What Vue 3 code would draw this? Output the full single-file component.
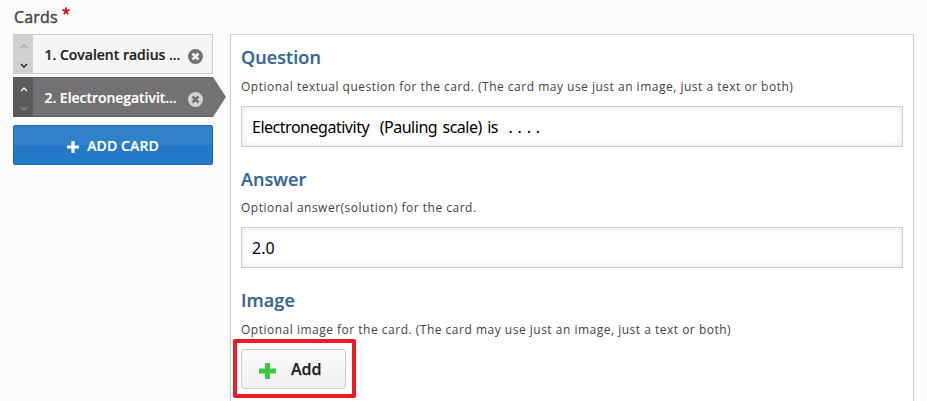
<script setup>
import { ref } from 'vue'

const cards = [
  { label: '1. Covalent radius ...', active: false },
  { label: '2. Electronegativit...', active: true },
]
const question = ref('Electronegativity\u00a0 (Pauling scale) is\u00a0 . . . .')
const answer = ref('2.0')
</script>

<template>
  <main class="editor">
    <div class="label">Cards<svg class="star" viewBox="0 0 8 8"><path d="M4 4V.2M4 4L.4 2.9M4 4l3.6-1.1M4 4L1.9 7.2M4 4l2.1 3.2" /></svg></div>
    <div class="columns">
      <aside class="side">
        <div v-for="card in cards" :key="card.label" class="tab" :class="{ active: card.active }">
          <div class="order">
            <svg class="up" viewBox="0 0 8 5"><path d="M1 4l3-3 3 3" /></svg>
            <svg class="down" viewBox="0 0 8 5"><path d="M1 1l3 3 3-3" /></svg>
          </div>
          <span class="name">{{ card.label }}</span>
          <svg class="remove" viewBox="0 0 14 14"><circle cx="7" cy="7" r="7" /><path d="M4.2 4.2l5.6 5.6M9.8 4.2l-5.6 5.6" /></svg>
        </div>
        <button class="add-card">
          <svg viewBox="0 0 12 12"><path d="M4.4 0h3.2v4.4H12v3.2H7.6V12H4.4V7.6H0V4.4h4.4z" /></svg>
          <span>ADD CARD</span>
        </button>
      </aside>
      <section class="panel">
        <div class="field">
          <h2>Question</h2>
          <p>Optional textual question for the card. (The card may use just an image, just a text or both)</p>
          <input v-model="question" class="long" type="text" />
        </div>
        <div class="field lower">
          <h2>Answer</h2>
          <p>Optional answer(solution) for the card.</p>
          <input v-model="answer" type="text" />
        </div>
        <div class="field lower media">
          <h2>Image</h2>
          <p>Optional image for the card. (The card may use just an image, just a text or both)</p>
          <div class="highlight">
            <button class="add">
              <svg viewBox="0 0 17 16"><path d="M6 0h5v5.5h6v5h-6V16H6v-5.500H0v-5h6z" /></svg>
              <span>Add</span>
            </button>
          </div>
        </div>
      </section>
    </div>
  </main>
</template>

<style>
body {
  background: #fcfcfc;
  overflow: hidden;
}
</style>

<style scoped>
.editor {
  box-sizing: border-box;
  width: 927px;
  height: 401px;
  padding: 0 13px;
  overflow: hidden;
  background: #fcfcfc;
  font-family: "Open Sans", "Noto Sans", sans-serif;
}
.label {
  height: 34px;
  box-sizing: border-box;
  padding: 6px 0 0 1px;
  display: flex;
  align-items: flex-start;
  font-size: 16px;
  line-height: 22px;
  font-weight: 400;
  letter-spacing: 0.2px;
  -webkit-text-stroke: 0.4px #444;
  color: #444;
}
.star {
  width: 8px;
  height: 8px;
  margin: 1px 0 0 4px;
  fill: none;
  stroke: #d90b0b;
  stroke-width: 1.7;
}
.columns {
  display: flex;
  gap: 17px;
}
.side {
  width: 200px;
  flex: none;
}
.tab {
  position: relative;
  box-sizing: border-box;
  display: flex;
  align-items: center;
  height: 40px;
  margin-bottom: 3px;
  border: 1px solid #ccc;
  border-left: 0;
  background: #f5f5f5;
  color: #222;
}
.order {
  box-sizing: border-box;
  width: 20px;
  height: 40px;
  margin: -1px 0;
  padding: 10px 0 6px 1px;
  display: flex;
  flex-direction: column;
  align-items: center;
  justify-content: space-between;
  background: #d0d0d0;
}
.order svg {
  width: 8px;
  height: 5px;
  fill: none;
  stroke: #222;
  stroke-width: 1.4;
}
.order .up {
  stroke: #aaa;
}
.name {
  width: 143px;
  padding: 1px 0 0 11.5px;
  box-sizing: border-box;
  font-size: 14px;
  line-height: 20px;
  font-weight: 600;
  letter-spacing: -0.01px;
  -webkit-text-stroke: 0.2px currentColor;
  white-space: pre;
}
.remove {
  flex: none;
  width: 15px;
  height: 15px;
  margin: 5px 0 0 12px;
  fill: #737173;
  stroke: #f5f5f5;
  stroke-width: 2.4;
}
.remove circle {
  stroke: none;
}
.tab.active {
  background: #737173;
  border-color: #605e60;
  border-right: 0;
  color: #fff;
}
.tab.active::after {
  content: "";
  position: absolute;
  left: 200px;
  top: -1px;
  width: 13px;
  height: 40px;
  background: #737173;
  clip-path: polygon(0 0, 100% 50%, 0 100%);
}
.active .order {
  background: #5c5a5c;
}
.active .order .up {
  stroke: #fff;
}
.active .order .down {
  stroke: #858385;
}
.active .name {
  letter-spacing: -0.04px;
}
.active .remove {
  fill: #d4d4d4;
  stroke: #737173;
}
button {
  font-family: inherit;
  box-sizing: border-box;
  display: flex;
  align-items: center;
}
.add-card {
  width: 200px;
  height: 40px;
  margin-top: 8px;
  padding: 2px 0 0;
  justify-content: center;
  gap: 8px;
  border: 1px solid #2067ad;
  border-radius: 2px;
  background: linear-gradient(#3080cb 50%, #2478c8 50%);
  color: #fff;
  font-size: 14px;
  line-height: 20px;
  font-weight: 600;
  -webkit-text-stroke: 0.2px #fff;
}
.add-card span {
  letter-spacing: 0.12px;
}
.add-card svg {
  width: 12px;
  height: 12px;
  margin-top: 2px;
  fill: #fff;
}
.panel {
  box-sizing: border-box;
  width: 684px;
  height: 400px;
  padding: 9px 10px;
  border: 1px solid #ccc;
  background: #fff;
}
.field {
  height: 121px;
}
h2 {
  margin: 0;
  font-size: 18px;
  line-height: 26px;
  font-weight: 600;
  letter-spacing: 0.08px;
  -webkit-text-stroke: 0.2px #356593;
  color: #356593;
}
.lower h2 {
  padding-top: 1px;
}
p {
  margin: 0;
  height: 36px;
  padding-top: 8px;
  box-sizing: border-box;
  font-size: 12px;
  line-height: 18px;
  letter-spacing: 0.5px;
  color: #444;
  white-space: nowrap;
}
.lower p {
  height: 35px;
  padding-top: 7px;
}
.media p {
  height: 36px;
  padding-top: 8px;
}
input {
  display: block;
  box-sizing: border-box;
  width: 662px;
  height: 41px;
  padding: 0 10px;
  border: 1px solid #ccc;
  background: #fff;
  box-shadow: inset 0 0 7px #e2e2e2;
  font-family: "Noto Sans", "Open Sans", sans-serif;
  font-size: 16px;
  color: #000;
  outline: 0;
}
.long {
  letter-spacing: -0.48px;
  word-spacing: 1.6px;
}
.highlight {
  width: 123px;
  height: 59px;
  box-sizing: border-box;
  margin: -10px 0 0 -8px;
  padding: 6px 4px;
  border: 4px solid #ed1c24;
  border-radius: 2px;
}
.add {
  width: 105px;
  height: 40px;
  padding: 0 0 0 17px;
  gap: 15px;
  border: 1px solid #ccc;
  border-radius: 3px;
  background: linear-gradient(#fbfbfb, #f0f0f0);
  color: #222;
  font-size: 16px;
  line-height: 22px;
  font-weight: 600;
  -webkit-text-stroke: 0.25px #222;
}
.add svg {
  width: 17px;
  height: 16px;
  margin-top: 4px;
  fill: #39c943;
}
</style>
